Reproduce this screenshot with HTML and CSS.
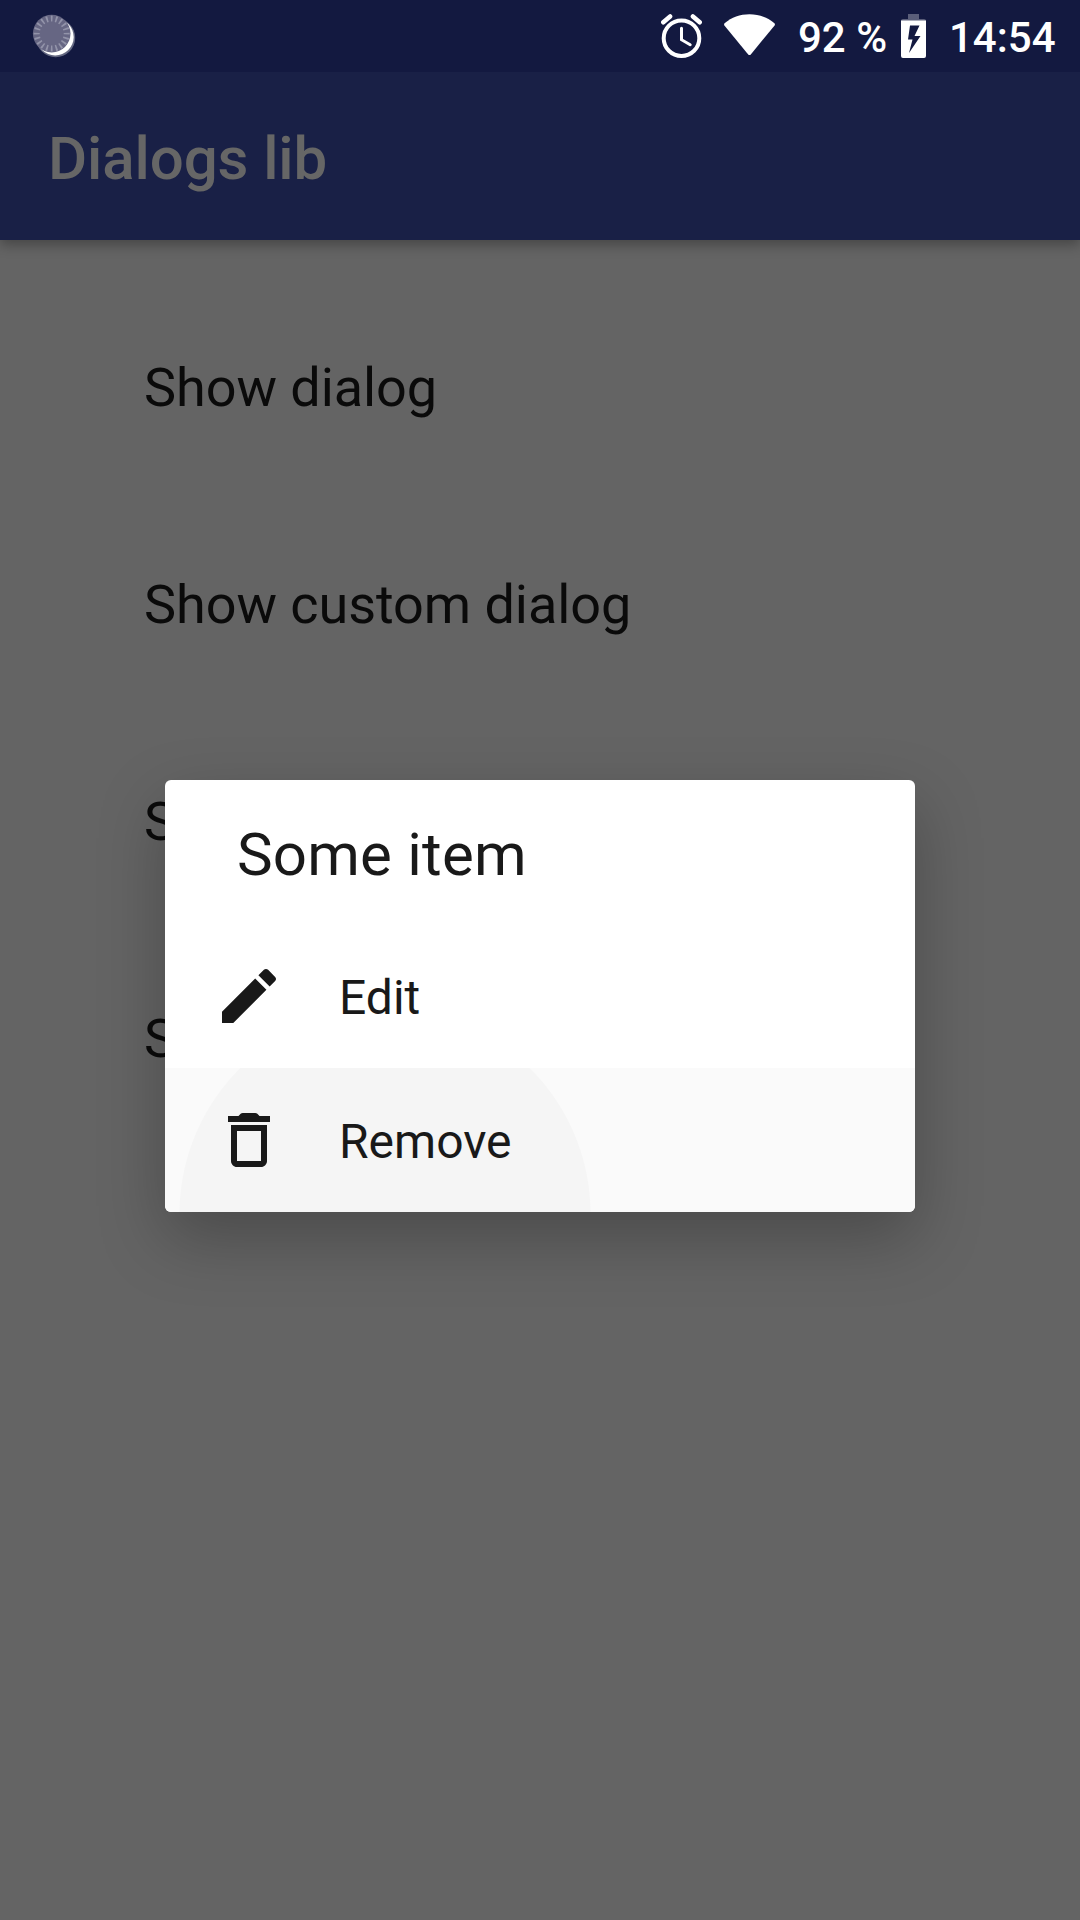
FILE: index.html
```html
<!DOCTYPE html>
<html lang="en">
<head>
<meta charset="utf-8">
<title>Dialogs lib</title>
<link rel="stylesheet" href="styles.css">
</head>
<body>
<div class="screen">
  <header class="status">
    <svg class="status-sync" width="46" height="50" viewBox="0 0 46 50">
      <circle class="sync-glow" cx="25.700" cy="27.800" r="19.500"/>
      <circle class="sync-moon" cx="25.200" cy="27" r="18.500"/>
      <circle class="sync-disc" cx="21.700" cy="23.600" r="18.800"/>
      <circle class="sync-ticks" cx="21.700" cy="23.600" r="15" pathLength="200"/>
    </svg>
    <div class="status-info">
      <svg class="alarm" width="41" height="44" viewBox="0 0 41 44">
        <circle cx="20.5" cy="24.2" r="17.8"/>
        <path class="hands" d="M20.5 14.2v11.5l8.7 5"/>
        <path class="bells" d="M2.3 8.3l6.8-5.8M38.7 8.3l-6.8-5.8"/>
      </svg>
      <svg class="wifi" width="51" height="42" viewBox="0 0 51 42">
        <path d="M.6 9.2C7.600 3.500 16 .3 25.500 .3S43.400 3.500 50.400 9.200q1 1 .2 2.200L27 40.200q-1.500 1.700-3 0L.4 11.400q-.8-1.200.2-2.200z"/>
      </svg>
      <span class="percent">92 %</span>
      <svg class="battery" width="25" height="44" viewBox="0 0 25 44">
        <path class="empty" d="M7 0h11v5H7zM0 7q0-2 2-2h21q2 0 2 2z"/>
        <path class="level" fill-rule="evenodd" d="M0 6.500h25V42q0 2-2 2H2q-2 0-2-2zM9 11.500l-2 14h4.500L8 39l11.500-17h-6l5-10.500z"/>
      </svg>
      <span class="clock">14:54</span>
    </div>
  </header>
  <div class="toolbar"><h1>Dialogs lib</h1></div>
  <main class="list">
    <div class="entry">Show dialog</div>
    <div class="entry">Show custom dialog</div>
    <div class="entry">S</div>
    <div class="entry">S</div>
  </main>
  <section class="dialog" role="dialog">
    <h2>Some item</h2>
    <div class="option">
      <svg width="72" height="72" viewBox="0 0 24 24"><path d="M3 17.250V21h3.750L17.810 9.940l-3.750-3.750L3 17.250zM20.710 7.040c.39-.39.39-1.020 0-1.410l-2.340-2.340c-.39-.39-1.020-.39-1.410 0l-1.830 1.830 3.750 3.750 1.830-1.830z"/></svg>
      <span>Edit</span>
    </div>
    <div class="option pressed">
      <svg width="72" height="72" viewBox="0 0 24 24"><path fill-rule="evenodd" d="M6 19c0 1.100.9 2 2 2h8c1.100 0 2-.9 2-2V7H6v12zM8 9h8v10H8V9zM15.500 4l-.71-.71c-.18-.18-.44-.29-.7-.29H9.910c-.26 0-.52.11-.7.29L8.500 4H5v2h14V4h-3.500z"/></svg>
      <span>Remove</span>
    </div>
  </section>
</div>
</body>
</html>
```
FILE: styles.css
```css
* { box-sizing: border-box; }
body { margin: 0; font-family: Roboto, sans-serif; }
h1, h2 { margin: 0; }
.screen {
  position: relative;
  display: flex;
  flex-direction: column;
  width: 1080px;
  height: 1920px;
  overflow: hidden;
  background: #646464;
}
.status {
  z-index: 2;
  display: flex;
  justify-content: space-between;
  height: 72px;
  padding: 0 25px 0 30px;
  background: #131940;
}
.status-sync { margin-top: 10px; }
.sync-glow { fill: #fff; opacity: .35; }
.sync-moon { fill: #fff; }
.sync-disc { fill: #666683; }
.sync-ticks {
  fill: none;
  stroke: #9293a9;
  stroke-width: 6;
  stroke-dasharray: 3.6 6.4;
  stroke-dashoffset: 1.8;
}
.status-info {
  display: flex;
  align-items: flex-start;
  color: #fff;
  font-size: 42px;
  font-weight: 500;
  line-height: 75px;
  white-space: nowrap;
}
.status-info svg { margin-top: 14px; fill: #fff; }
.status-info .alarm { fill: none; stroke: #fff; stroke-width: 4; }
.alarm .hands { stroke-width: 3; stroke-linecap: round; }
.alarm .bells { stroke-width: 4.5; stroke-linecap: round; }
.wifi { margin-left: 22px; }
.percent { width: 103px; margin-left: 23px; }
.battery .empty { opacity: .3; }
.clock { width: 106px; margin-left: 23px; }
.toolbar {
  z-index: 1;
  display: flex;
  align-items: center;
  height: 168px;
  padding: 5px 48px 0;
  background: #192046;
  box-shadow: 0 5px 12px rgba(0, 0, 0, .3);
}
.toolbar h1 {
  color: #666;
  font-size: 60px;
  font-weight: 500;
  line-height: 70px;
  letter-spacing: -.1px;
}
.list { padding: 39px 144px 0; }
.entry {
  height: 217px;
  color: #0a0a0a;
  font-size: 54px;
  line-height: 217px;
  letter-spacing: -.06px;
}
.dialog {
  position: absolute;
  left: 165px;
  top: 780px;
  width: 750px;
  height: 432px;
  overflow: hidden;
  border-radius: 6px;
  color: #191919;
  background: #fff;
  box-shadow: 0 26px 66px rgba(0, 0, 0, .26);
}
.dialog h2 {
  height: 144px;
  padding: 0 72px;
  font-size: 60px;
  font-weight: 400;
  line-height: 150px;
  letter-spacing: .22px;
}
.option {
  display: flex;
  align-items: center;
  gap: 54px;
  height: 144px;
  padding: 0 48px;
  font-size: 48px;
}
.option span { padding-top: 2px; }
.option svg { fill: #191919; }
.option.pressed {
  background: radial-gradient(circle at 220px 146px, #f5f5f5 205px, #fafafa 206px);
}
```
